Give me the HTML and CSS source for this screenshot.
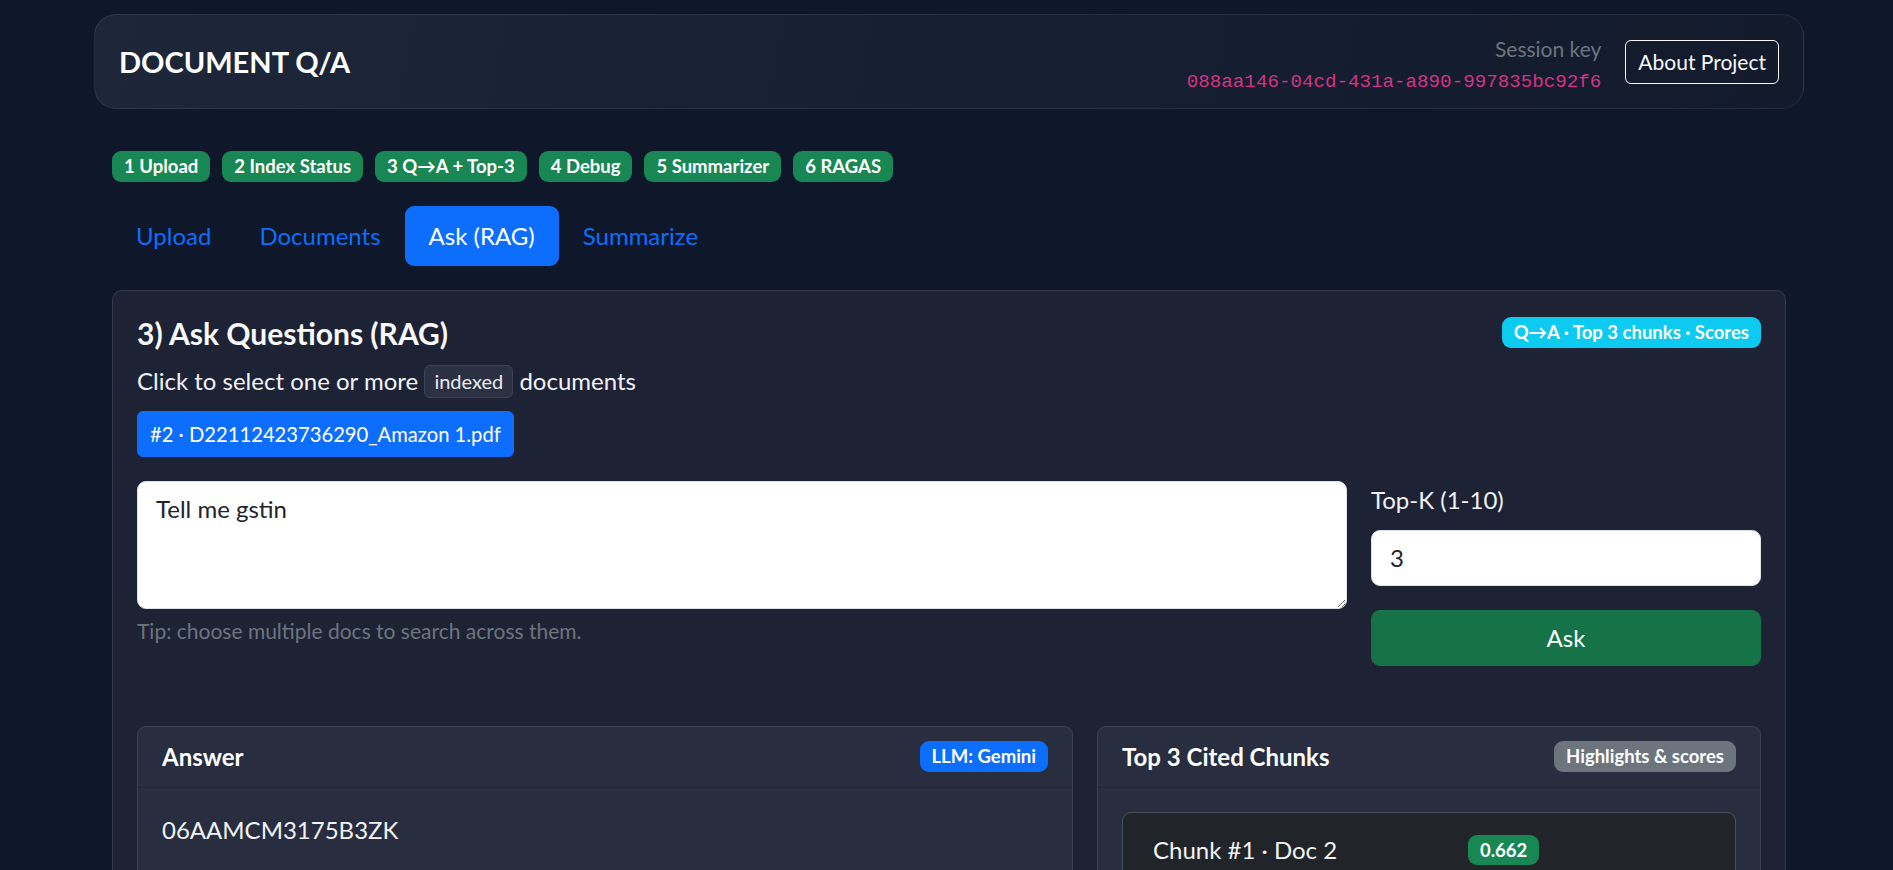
FILE: index.html
```html
<!DOCTYPE html>
<html lang="en">
<head>
<meta charset="utf-8">
<title>Document Q/A</title>
<link rel="stylesheet" href="styles.css">
</head>
<body>
<div class="page">
  <header class="topbar">
    <div class="brand">DOCUMENT Q/A</div>
    <div class="topbar-right">
      <div class="session">
        <div class="session-label">Session key</div>
        <code class="session-key">088aa146-04cd-431a-a890-997835bc92f6</code>
      </div>
      <button class="btn-outline">About Project</button>
    </div>
  </header>

  <div class="steps">
    <span class="badge badge-green">1 Upload</span>
    <span class="badge badge-green">2 Index Status</span>
    <span class="badge badge-green">3 Q→A + Top-3</span>
    <span class="badge badge-green">4 Debug</span>
    <span class="badge badge-green">5 Summarizer</span>
    <span class="badge badge-green">6 RAGAS</span>
  </div>

  <nav class="tabs">
    <a class="tab">Upload</a>
    <a class="tab">Documents</a>
    <a class="tab active">Ask (RAG)</a>
    <a class="tab">Summarize</a>
  </nav>

  <section class="panel">
    <div class="panel-head">
      <h5 class="panel-title">3) Ask Questions (RAG)</h5>
      <span class="badge badge-info">Q→A · Top 3 chunks · Scores</span>
    </div>
    <p class="hint">Click to select one or more <span class="tag">indexed</span> documents</p>
    <div class="chips">
      <button class="chip">#2 · D22112423736290_Amazon 1.pdf</button>
    </div>

    <div class="ask-row">
      <div class="ask-main">
        <textarea class="field textarea" rows="3">Tell me gstin</textarea>
        <div class="tip">Tip: choose multiple docs to search across them.</div>
      </div>
      <div class="ask-side">
        <label class="field-label">Top-K (1-10)</label>
        <input class="field input" type="text" value="3">
        <button class="btn-ask">Ask</button>
      </div>
    </div>

    <div class="results">
      <div class="rcard">
        <div class="rcard-head">
          <span class="rcard-title">Answer</span>
          <span class="badge badge-blue">LLM: Gemini</span>
        </div>
        <div class="rcard-body">
          <div class="answer">06AAMCM3175B3ZK</div>
        </div>
      </div>
      <div class="rcard">
        <div class="rcard-head">
          <span class="rcard-title">Top 3 Cited Chunks</span>
          <span class="badge badge-gray">Highlights &amp; scores</span>
        </div>
        <div class="rcard-body">
          <div class="chunk">
            <div class="chunk-row">
              <span class="chunk-name">Chunk #1 · Doc 2</span>
              <span class="badge badge-green">0.662</span>
            </div>
          </div>
        </div>
      </div>
    </div>
  </section>
</div>
</body>
</html>
```

FILE: styles.css
```css
* { box-sizing: border-box; }

html, body {
  margin: 0;
  padding: 0;
}

body {
  background: #0f172a;
  color: #f1f3f5;
  font-family: Lato, "Noto Sans", sans-serif;
  font-size: 24px;
  line-height: 1.5;
  overflow: hidden;
  height: 870px;
}

.page {
  width: 1710px;
  margin: 14px 0 0 94px;
}

/* ---------- Top bar ---------- */
.topbar {
  display: flex;
  align-items: center;
  justify-content: space-between;
  height: 95px;
  padding: 0 24px;
  border: 1px solid rgba(255, 255, 255, 0.08);
  border-radius: 22px;
  background: linear-gradient(100deg, #1e2739 0%, #172033 50%, #121a2c 100%);
}

.brand {
  font-size: 29px;
  font-weight: 700;
  line-height: 36px;
  color: #ffffff;
}

.topbar-right {
  display: flex;
  align-items: center;
  gap: 24px;
}

.session {
  text-align: right;
  padding-top: 6px;
}

.session-label {
  font-size: 21px;
  line-height: 30px;
  color: #6c757d;
  margin-bottom: 4px;
}

.session-key {
  display: block;
  font-family: "Liberation Mono", "DejaVu Sans Mono", monospace;
  font-size: 19.2px;
  line-height: 28px;
  color: #d63384;
}

.btn-outline {
  font-family: inherit;
  font-size: 21px;
  line-height: 30px;
  padding: 6px 12px;
  height: 44px;
  color: #f8f9fa;
  background: transparent;
  border: 1px solid #f8f9fa;
  border-radius: 6px;
}

/* ---------- Badges ---------- */
.badge {
  display: inline-block;
  font-size: 18.5px;
  font-weight: 700;
  line-height: 1;
  padding: 6px 12px;
  border-radius: 9px;
  color: #ffffff;
  white-space: nowrap;
}

.badge-green { background: #198754; }
.badge-info { background: #0dcaf0; }
.badge-blue { background: #0d6efd; }
.badge-gray { background: #6c757d; }

.steps {
  display: flex;
  gap: 12px;
  margin: 42px 0 0 18px;
}

/* ---------- Tabs ---------- */
.tabs {
  display: flex;
  margin: 24px 0 0 18px;
}

.tab {
  display: block;
  padding: 12px 24px;
  font-size: 24px;
  line-height: 36px;
  color: #0d6efd;
  border-radius: 9px;
}

.tab.active {
  background: #0d6efd;
  color: #ffffff;
}

/* ---------- Panel ---------- */
.panel {
  margin: 24px 18px 0 18px;
  padding: 24px;
  background: #1e2235;
  border: 1px solid rgba(255, 255, 255, 0.1);
  border-radius: 10px;
  min-height: 700px;
}

.panel-head {
  display: flex;
  align-items: center;
  justify-content: space-between;
  margin-bottom: 12px;
}

.panel-title {
  margin: 0;
  font-size: 30px;
  line-height: 36px;
  font-weight: 700;
  color: #f8f9fa;
}

.hint {
  margin: 0 0 12px 0;
  font-size: 24px;
  line-height: 36px;
  color: #f1f3f5;
}

.tag {
  display: inline-block;
  height: 33px;
  padding: 0 9px;
  font-size: 20px;
  line-height: 31px;
  color: #e9ecef;
  background: #2b3042;
  border: 1px solid #3c4254;
  border-radius: 6px;
  vertical-align: 1px;
}

.chips {
  display: flex;
}

.chip {
  font-family: inherit;
  font-size: 20.2px;
  line-height: 30px;
  height: 46px;
  padding: 7px 12px;
  color: #ffffff;
  background: #0d6efd;
  border: 1px solid #0d6efd;
  border-radius: 6px;
}

/* ---------- Ask row ---------- */
.ask-row {
  display: grid;
  grid-template-columns: 1210px 1fr;
  gap: 24px;
  margin-top: 24px;
}

.field {
  display: block;
  width: 100%;
  font-family: inherit;
  font-size: 24px;
  line-height: 36px;
  padding: 9px 18px;
  color: #212529;
  background: #ffffff;
  border: 1px solid #dee2e6;
  border-radius: 9px;
  outline: none;
}

.textarea {
  height: 128px;
  resize: vertical;
}

.input {
  height: 56px;
}

.tip {
  margin-top: 6px;
  font-size: 21px;
  line-height: 31px;
  color: #6c757d;
}

.field-label {
  display: block;
  margin: 1px 0 12px 0;
  font-size: 24px;
  line-height: 36px;
  color: #f1f3f5;
}

.btn-ask {
  display: block;
  width: 100%;
  height: 56px;
  margin-top: 24px;
  font-family: inherit;
  font-size: 24px;
  line-height: 36px;
  color: #ffffff;
  background: #157347;
  border: 1px solid #157347;
  border-radius: 9px;
}

/* ---------- Results ---------- */
.results {
  display: grid;
  grid-template-columns: 936px 1fr;
  gap: 24px;
  margin-top: 60px;
}

.rcard {
  background: #282d3f;
  border: 1px solid rgba(255, 255, 255, 0.1);
  border-radius: 9px;
}

.rcard-head {
  display: flex;
  align-items: center;
  justify-content: space-between;
  padding: 12px 24px;
  border-bottom: 1px solid rgba(0, 0, 0, 0.2);
}

.rcard-title {
  font-size: 24px;
  line-height: 36px;
  font-weight: 700;
  color: #ffffff;
}

.rcard-body {
  padding: 24px;
}

.answer {
  font-size: 24px;
  line-height: 36px;
  color: #f1f3f5;
}

.chunk {
  background: #212529;
  border: 1px solid #4a5059;
  border-radius: 9px;
  padding: 22px 24px 40px 30px;
}

.chunk-row {
  display: grid;
  grid-template-columns: 315px auto;
  justify-content: start;
  align-items: center;
}

.chunk-name {
  font-size: 24px;
  line-height: 30px;
  color: #f1f3f5;
}
```
